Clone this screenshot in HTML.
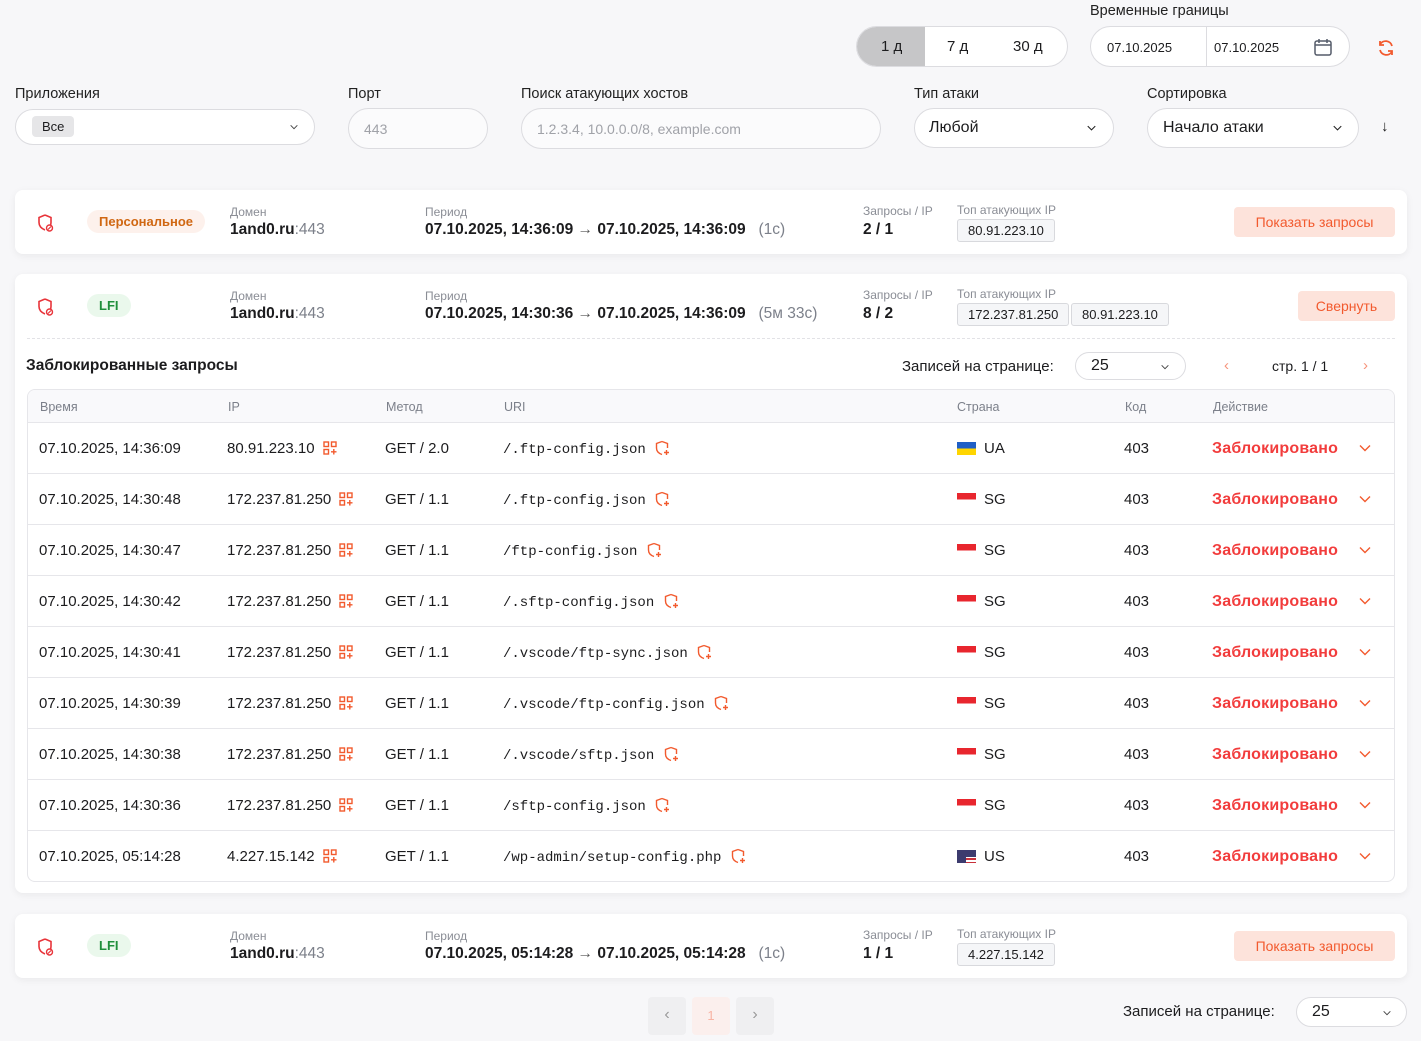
<!DOCTYPE html>
<html><head><meta charset="utf-8"><style>
*{box-sizing:border-box;margin:0;padding:0}
body{width:1421px;height:1041px;background:#f7f7f9;font-family:"Liberation Sans",sans-serif;color:#1c1c1e;position:relative;overflow:hidden}
.a{position:absolute;white-space:nowrap}
.lbl{font-size:14.5px;color:#222}
.inp{position:absolute;border:1px solid #dcdce0;border-radius:22px;background:#fbfbfc}
.card{position:absolute;left:15px;width:1392px;background:#fff;border-radius:8px;box-shadow:0 2px 8px rgba(0,0,0,.06)}
.sm{font-size:12px;color:#8a8d95}
.b{font-weight:bold;font-size:15.5px}
.chip{position:absolute;border:1px solid #d8d9dd;background:#f5f6f8;border-radius:3px;font-size:13px;height:23px;line-height:21px;padding:0 10px}
.btn{position:absolute;background:#fde3db;color:#f25a2e;border-radius:4px;font-size:14px;text-align:center}
.row{position:absolute;left:0;width:1367px;height:51px;border-top:1px solid #e6e6ea;font-size:15px}
.row div{position:absolute;top:17px;white-space:nowrap}
.mono{font-family:"Liberation Mono",monospace;font-size:14px}
.red{color:#f23c3c;font-weight:bold;font-size:16px;letter-spacing:.2px}
.fl{position:absolute;width:19px;height:13px;top:19px}
</style></head><body>

<svg width="0" height="0" style="position:absolute"><defs><symbol id="sh" viewBox="0 0 20 20"><path d="M10 2l6 2.5v5c0 1.5-.3 2.8-1 4M10 2L4 4.5v5c0 3.5 2.5 6 6 7.5" fill="none" stroke="#e8343a" stroke-width="1.6"/><circle cx="14.5" cy="15" r="3" fill="#fff" stroke="#e8343a" stroke-width="1.4"/><path d="M13 16.5l3-3" stroke="#e8343a" stroke-width="1.2"/></symbol>
<symbol id="qr" viewBox="0 0 14 14"><g fill="none" stroke="#f25a2e" stroke-width="1.4"><rect x="1" y="1" width="4.5" height="4.5"/><rect x="8.5" y="1" width="4.5" height="4.5"/><rect x="1" y="8.5" width="4.5" height="4.5"/><path d="M10.8 8v5.5M8 10.8h5.5"/></g></symbol>
<symbol id="sp" viewBox="0 0 16 16"><g fill="none" stroke="#f25a2e" stroke-width="1.4"><path d="M8 1.5l5.5 2v4.5M8 1.5l-5.5 2v4.5c0 3.5 2.5 5.5 5.5 6.5"/><path d="M12.5 10v5M10 12.5h5"/></g></symbol>
<symbol id="cv" viewBox="0 0 12 8"><path d="M1 1.5l5 5 5-5" fill="none" stroke="currentColor" stroke-width="1.4"/></symbol></defs></svg>

<!-- top controls -->
<div class="a lbl" style="left:1090px;top:3px">Временные границы</div>
<div class="inp" style="left:856px;top:26px;width:212px;height:41px;background:#fff;overflow:hidden">
 <div class="a" style="left:0;top:0;width:68px;height:41px;background:#c6c6c8"></div>
 <div class="a" style="left:24px;top:11px;font-size:15px">1 д</div>
 <div class="a" style="left:90px;top:11px;font-size:15px">7 д</div>
 <div class="a" style="left:156px;top:11px;font-size:15px">30 д</div>
</div>
<div class="inp" style="left:1090px;top:26px;width:260px;height:41px;background:#fff">
 <div class="a" style="left:115px;top:0;width:1px;height:39px;background:#dcdce0"></div>
 <div class="a" style="left:16px;top:13px;font-size:13px">07.10.2025</div>
 <div class="a" style="left:123px;top:13px;font-size:13px">07.10.2025</div>
 <svg class="a" style="left:222px;top:10px" width="20" height="20" viewBox="0 0 20 20" fill="none" stroke="#555c6a" stroke-width="1.5"><rect x="2" y="4" width="16" height="14" rx="2"/><path d="M2 8h16M6 2v4M14 2v4"/></svg>
</div>
<svg class="a" style="left:1376px;top:38px" width="20" height="20" viewBox="0 0 20 20" fill="none" stroke="#f25a2e" stroke-width="1.8"><path d="M16 8a6.5 6.5 0 0 0-12-1.5M4 12a6.5 6.5 0 0 0 12 1.5"/><path d="M4 3v4h4M16 17v-4h-4"/></svg>

<div class="a lbl" style="left:15px;top:86px">Приложения</div>
<div class="inp" style="left:15px;top:109px;width:300px;height:36px;background:#fff">
 <div class="a" style="left:16px;top:6px;background:#e6e6e8;border-radius:4px;padding:3px 10px;font-size:13px">Все</div>
 <svg class="a" style="left:274px;top:14px;color:#444" width="8" height="6"><use href="#cv"/></svg>
</div>
<div class="a lbl" style="left:348px;top:86px">Порт</div>
<div class="inp" style="left:348px;top:108px;width:140px;height:41px"><div class="a" style="left:15px;top:12px;font-size:14px;color:#a0a2a8">443</div></div>
<div class="a lbl" style="left:521px;top:86px">Поиск атакующих хостов</div>
<div class="inp" style="left:521px;top:108px;width:360px;height:41px"><div class="a" style="left:15px;top:12px;font-size:14px;color:#a0a2a8">1.2.3.4, 10.0.0.0/8, example.com</div></div>
<div class="a lbl" style="left:914px;top:86px">Тип атаки</div>
<div class="inp" style="left:914px;top:108px;width:200px;height:40px;background:#fff"><div class="a" style="left:14px;top:10px;font-size:16px">Любой</div><svg class="a" style="left:172px;top:16px;color:#222" width="9" height="6"><use href="#cv"/></svg></div>
<div class="a lbl" style="left:1147px;top:86px">Сортировка</div>
<div class="inp" style="left:1147px;top:108px;width:212px;height:40px;background:#fff"><div class="a" style="left:15px;top:10px;font-size:16px">Начало атаки</div><svg class="a" style="left:185px;top:16px;color:#222" width="9" height="6"><use href="#cv"/></svg></div>
<div class="a" style="left:1381px;top:118px;font-size:15px">&#8595;</div>

<!-- card 1 -->
<div class="card" style="top:190px;height:64px">
 <svg class="a" style="left:20px;top:23px" width="20" height="20"><use href="#sh"/></svg>
 <div class="a" style="left:72px;top:20px;background:#fdf1ec;color:#d06712;border-radius:12px;padding:4px 12px;font-size:13px;font-weight:bold">Персональное</div>
 <div class="a sm" style="left:215px;top:15px">Домен</div>
 <div class="a b" style="left:215px;top:31px">1and0.ru<span style="color:#7c808a;font-weight:normal">:443</span></div>
 <div class="a sm" style="left:410px;top:15px">Период</div>
 <div class="a b" style="left:410px;top:31px">07.10.2025, 14:36:09 <span style="font-weight:normal;color:#555"> → </span> 07.10.2025, 14:36:09 <span style="font-weight:normal;color:#7c808a">&nbsp; (1с)</span></div>
 <div class="a sm" style="left:848px;top:14px">Запросы / IP</div>
 <div class="a b" style="left:848px;top:31px">2 / 1</div>
 <div class="a sm" style="left:942px;top:13px">Топ атакующих IP</div>
 <div class="chip" style="left:942px;top:29px">80.91.223.10</div>
 <div class="btn" style="left:1219px;top:17px;width:161px;height:30px;line-height:30px">Показать запросы</div>
</div>

<!-- card 2 -->
<div class="card" style="top:274px;height:619px">
 <svg class="a" style="left:20px;top:23px" width="20" height="20"><use href="#sh"/></svg>
 <div class="a" style="left:72px;top:20px;background:#eaf8ec;color:#1f8f3a;border-radius:12px;padding:4px 12px;font-size:13px;font-weight:bold">LFI</div>
 <div class="a sm" style="left:215px;top:15px">Домен</div>
 <div class="a b" style="left:215px;top:31px">1and0.ru<span style="color:#7c808a;font-weight:normal">:443</span></div>
 <div class="a sm" style="left:410px;top:15px">Период</div>
 <div class="a b" style="left:410px;top:31px">07.10.2025, 14:30:36 <span style="font-weight:normal;color:#555"> → </span> 07.10.2025, 14:36:09 <span style="font-weight:normal;color:#7c808a">&nbsp; (5м 33с)</span></div>
 <div class="a sm" style="left:848px;top:14px">Запросы / IP</div>
 <div class="a b" style="left:848px;top:31px">8 / 2</div>
 <div class="a sm" style="left:942px;top:13px">Топ атакующих IP</div>
 <div class="chip" style="left:942px;top:29px">172.237.81.250</div>
 <div class="chip" style="left:1056px;top:29px">80.91.223.10</div>
 <div class="btn" style="left:1283px;top:17px;width:97px;height:30px;line-height:30px">Свернуть</div>
 <div class="a" style="left:12px;top:64px;width:1368px;border-top:1px dashed #e2e2e6"></div>
 <div class="a" style="left:11px;top:83px;font-size:15.5px;font-weight:bold">Заблокированные запросы</div>
 <div class="a" style="left:887px;top:84px;font-size:15px">Записей на странице:</div>
 <div class="inp" style="left:1060px;top:78px;width:111px;height:28px;background:#fff"><div class="a" style="left:15px;top:4px;font-size:16px">25</div><svg class="a" style="left:85px;top:11px;color:#444" width="8" height="6"><use href="#cv"/></svg></div>
 <div class="a" style="left:1209px;top:83px;color:#f7937a;font-size:15px">‹</div>
 <div class="a" style="left:1257px;top:84px;font-size:14px">стр. 1 / 1</div>
 <div class="a" style="left:1348px;top:83px;color:#f7937a;font-size:15px">›</div>

 <div class="a" style="left:12px;top:115px;width:1368px;height:493px;border:1px solid #e6e6ea;border-radius:8px;overflow:hidden">
  <div class="a" style="left:0;top:0;width:1367px;height:33px;background:#f9f9fb;font-size:12.5px;color:#7c808a">
   <div class="a" style="left:12px;top:10px">Время</div><div class="a" style="left:200px;top:10px">IP</div><div class="a" style="left:358px;top:10px">Метод</div><div class="a" style="left:476px;top:10px">URI</div><div class="a" style="left:929px;top:10px">Страна</div><div class="a" style="left:1097px;top:10px">Код</div><div class="a" style="left:1185px;top:10px">Действие</div>
  </div>
 </div>
</div>

<div id="rows" style="position:absolute;left:27px;top:422px;width:1367px;height:459px;overflow:hidden"></div>

<!-- card 3 -->
<div class="card" style="top:914px;height:64px">
 <svg class="a" style="left:20px;top:23px" width="20" height="20"><use href="#sh"/></svg>
 <div class="a" style="left:72px;top:20px;background:#eaf8ec;color:#1f8f3a;border-radius:12px;padding:4px 12px;font-size:13px;font-weight:bold">LFI</div>
 <div class="a sm" style="left:215px;top:15px">Домен</div>
 <div class="a b" style="left:215px;top:31px">1and0.ru<span style="color:#7c808a;font-weight:normal">:443</span></div>
 <div class="a sm" style="left:410px;top:15px">Период</div>
 <div class="a b" style="left:410px;top:31px">07.10.2025, 05:14:28 <span style="font-weight:normal;color:#555"> → </span> 07.10.2025, 05:14:28 <span style="font-weight:normal;color:#7c808a">&nbsp; (1с)</span></div>
 <div class="a sm" style="left:848px;top:14px">Запросы / IP</div>
 <div class="a b" style="left:848px;top:31px">1 / 1</div>
 <div class="a sm" style="left:942px;top:13px">Топ атакующих IP</div>
 <div class="chip" style="left:942px;top:29px">4.227.15.142</div>
 <div class="btn" style="left:1219px;top:17px;width:161px;height:30px;line-height:30px">Показать запросы</div>
</div>

<!-- bottom pagination -->
<div class="a" style="left:648px;top:997px;width:38px;height:38px;background:#efeff1;border-radius:4px;text-align:center;line-height:36px;color:#999">‹</div>
<div class="a" style="left:692px;top:997px;width:38px;height:38px;background:#fbefed;border-radius:4px;text-align:center;line-height:38px;color:#f8b4a4;font-size:13px">1</div>
<div class="a" style="left:736px;top:997px;width:38px;height:38px;background:#efeff1;border-radius:4px;text-align:center;line-height:36px;color:#999">›</div>
<div class="a" style="left:1123px;top:1003px;font-size:15px">Записей на странице:</div>
<div class="inp" style="left:1296px;top:997px;width:111px;height:30px;background:#fff"><div class="a" style="left:15px;top:5px;font-size:16px">25</div><svg class="a" style="left:86px;top:12px;color:#444" width="8" height="6"><use href="#cv"/></svg></div>

<script>
var d=[["07.10.2025, 14:36:09","80.91.223.10","GET / 2.0","/.ftp-config.json","UA"],["07.10.2025, 14:30:48","172.237.81.250","GET / 1.1","/.ftp-config.json","SG"],["07.10.2025, 14:30:47","172.237.81.250","GET / 1.1","/ftp-config.json","SG"],["07.10.2025, 14:30:42","172.237.81.250","GET / 1.1","/.sftp-config.json","SG"],["07.10.2025, 14:30:41","172.237.81.250","GET / 1.1","/.vscode/ftp-sync.json","SG"],["07.10.2025, 14:30:39","172.237.81.250","GET / 1.1","/.vscode/ftp-config.json","SG"],["07.10.2025, 14:30:38","172.237.81.250","GET / 1.1","/.vscode/sftp.json","SG"],["07.10.2025, 14:30:36","172.237.81.250","GET / 1.1","/sftp-config.json","SG"],["07.10.2025, 05:14:28","4.227.15.142","GET / 1.1","/wp-admin/setup-config.php","US"]];
var h='';
d.forEach(function(r,i){var fl=r[4]=="SG"?"background:linear-gradient(#e8262e 50%,#fff 50%)":r[4]=="UA"?"background:linear-gradient(#1f5fc6 50%,#ffd500 50%)":"background:repeating-linear-gradient(#c8303a 0 2px,#fff 2px 4px);box-shadow:inset 9px 7px 0 0 #3c3b6e";
h+='<div class="row" style="top:'+(51*i)+'px"><div style="left:12px">'+r[0]+'</div><div style="left:200px">'+r[1]+' <svg width="14" height="14" style="vertical-align:-2px;margin-left:4px"><use href="#qr"/></svg></div><div style="left:358px">'+r[2]+'</div><div style="left:476px" class="mono">'+r[3]+' <svg width="16" height="16" style="vertical-align:-3px"><use href="#sp"/></svg></div><span class="fl" style="left:930px;'+fl+'"></span><div style="left:957px">'+r[4]+'</div><div style="left:1097px">403</div><div style="left:1185px" class="red">Заблокировано</div><svg style="position:absolute;left:1332px;top:21px;color:#f25a2e" width="12" height="8"><use href="#cv"/></svg></div>';});
document.getElementById('rows').innerHTML=h;
</script>
</body></html>
